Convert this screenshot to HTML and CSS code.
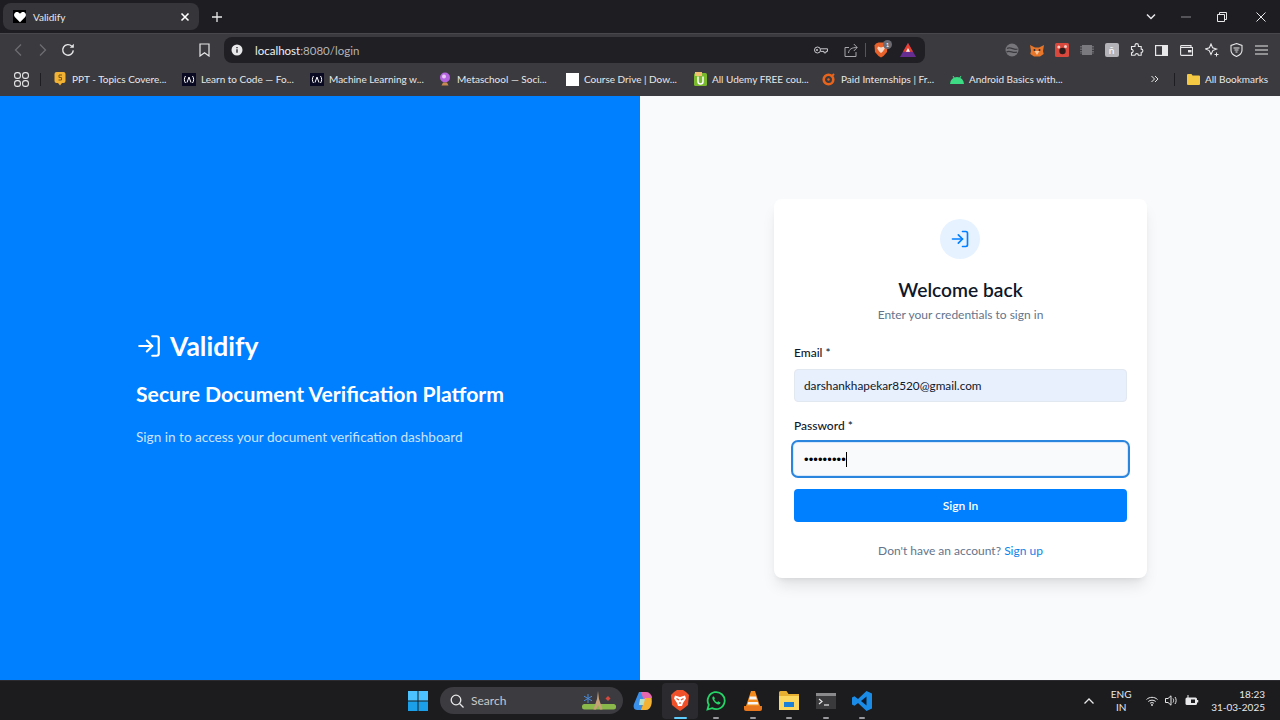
FILE: index.html
```html
<!DOCTYPE html>
<html lang="en">
<head>
  <meta charset="UTF-8">
  <meta name="viewport" content="width=device-width, initial-scale=1.0">
  <link rel="stylesheet" href="styles.css">
  <title>Validify</title>
</head>
<body>
  <!-- browser window -->
  <div class="tabstrip">
    <div class="tab">
      <span class="tab-favicon"><svg width="14" height="14" viewBox="0 0 24 24"><path d="M12 21 3.5 12.5C1 10 1.3 6 4 4.3 6.6 2.7 10 3.6 12 6.5 14 3.6 17.4 2.7 20 4.3 22.7 6 23 10 20.500 12.500Z" fill="#fff"/></svg></span>
      <span class="tab-title">Validify</span>
      <svg class="tab-close" width="10" height="10" viewBox="0 0 10 10"><path d="M1.500 1.500l7 7m0-7l-7 7" stroke="#fff" stroke-width="1.600"/></svg>
    </div>
    <svg class="tab-new" width="12" height="12" viewBox="0 0 12 12"><path d="M6 1v10M1 6h10" stroke="#e8e8ea" stroke-width="1.300"/></svg>
    <div class="window-controls">
      <svg width="12" height="8" viewBox="0 0 12 8"><path d="M2 1.500l4 4 4-4" fill="none" stroke="#e8e8ea" stroke-width="1.500"/></svg>
      <svg class="ctl-min" width="10" height="2" viewBox="0 0 10 2"><path d="M0 1h10" stroke="#8a8a8e"/></svg>
      <svg class="ctl-max" width="10" height="10" viewBox="0 0 10 10"><path d="M.5 2.500h7v7h-7zM2.500 2.500v-2h7v7h-2" fill="none" stroke="#e8e8ea"/></svg>
      <svg class="ctl-close" width="10" height="10" viewBox="0 0 10 10"><path d="M.5.5l9 9m0-9l-9 9" stroke="#e8e8ea"/></svg>
    </div>
  </div>

  <div class="toolbar">
    <div class="nav-buttons">
      <svg width="10" height="14" viewBox="0 0 10 14"><path d="M8 1.500 2.500 7 8 12.500" fill="none" stroke="#6d6d72" stroke-width="1.300"/></svg>
      <svg width="10" height="14" viewBox="0 0 10 14"><path d="M2 1.500 7.500 7 2 12.500" fill="none" stroke="#6d6d72" stroke-width="1.300"/></svg>
      <svg class="reload" width="14" height="14" viewBox="0 0 14 14"><path d="M12.300 7.400A5.300 5.300 0 1 1 10.800 3.200" fill="none" stroke="#e8e8ea" stroke-width="1.400"/><path d="M12.800.8v4h-4z" fill="#e8e8ea"/></svg>
    </div>
    <svg class="bookmark-page" width="11" height="14" viewBox="0 0 11 14"><path d="M1 1h9v12L5.500 9.800 1 13z" fill="none" stroke="#e8e8ea" stroke-width="1.200"/></svg>
    <div class="address">
      <svg width="12" height="12" viewBox="0 0 12 12"><circle cx="6" cy="6" r="5.500" fill="#e8e8ea"/><path d="M6 5.200v3.600M6 3v1.200" stroke="#1e1e22" stroke-width="1.300"/></svg>
      <span class="url">localhost<span class="url-dim">:8080/login</span></span>
      <div class="address-end">
        <svg width="14" height="8" viewBox="0 0 14 8"><circle cx="3.500" cy="4" r="3" fill="none" stroke="#c8c8cc"/><circle cx="3" cy="4" r="1" fill="#c8c8cc"/><path d="M6.500 2.800h7v2.600h-1.500v1.400h-2V5.400H6.500" fill="none" stroke="#c8c8cc"/></svg>
        <svg class="share" width="14" height="14" viewBox="0 0 14 14"><path d="M5 4.500H1v9h11V9" fill="none" stroke="#a8a8ac"/><path d="M4.500 10C5 6 8 4.500 13 4.500M9.800 1l3.400 3.500L9.800 8" fill="none" stroke="#a8a8ac"/></svg>
        <span class="address-sep"></span>
        <span class="brave-wrap">
          <svg width="14" height="16" viewBox="0 0 14 16"><path d="M2 1.500 4.500.5h5L12 1.500l1.500 2-.5 6.500-3.500 4L7 15.500 4.500 14 1 10 .5 3.500z" fill="#e8602a"/><path d="M4 4.500l3 1 3-1 .8 2-2 3L7 11 5.200 9.500l-2-3z" fill="#f5d8c8"/></svg>
          <span class="brave-badge">1</span>
        </span>
        <svg class="triangle" width="16" height="14" viewBox="0 0 16 14"><path d="M8 0l8 14H0z" fill="#662d91"/><path d="M8 0l5 8.800H3z" fill="#e8412f"/><path d="M8 5l2 3.800H6z" fill="#fff"/></svg>
      </div>
    </div>
    <div class="extensions">
      <svg width="14" height="14" viewBox="0 0 14 14"><circle cx="7" cy="7" r="6.500" fill="#77777b"/><path d="M2 5.500C6 3 9 8 12.500 6M1.500 9C5 6.500 8 11 12 9" fill="none" stroke="#3a3a3f" stroke-width="1.200"/></svg>
      <svg width="14" height="13" viewBox="0 0 14 13"><path d="M0 1l5 2.500h4L14 1l-1 6 .7 3-3.700 2.500H4L.3 10 1 7z" fill="#e8762a"/><path d="M4.500 7h5L7 11z" fill="#f5c9a0"/><circle cx="4.500" cy="6" r="1" fill="#2c2c30"/><circle cx="9.500" cy="6" r="1" fill="#2c2c30"/></svg>
      <svg width="14" height="14" viewBox="0 0 14 14"><rect width="14" height="14" rx="1.500" fill="#d8483c"/><circle cx="7.500" cy="8" r="3.200" fill="#2c1c1c"/><circle cx="3.800" cy="4" r="1.500" fill="#f5d0c8"/><circle cx="10.500" cy="3.500" r="1.500" fill="#f5d0c8"/></svg>
      <svg width="14" height="12" viewBox="0 0 14 12"><rect x="2" y="1" width="10" height="10" fill="#7a7a7e"/><path d="M1 2v8M13 2v8" stroke="#77777b" stroke-width="1.500" stroke-dasharray="1.500 1"/></svg>
      <span class="ext-tile">ñ</span>
      <svg width="14" height="14" viewBox="0 0 14 14"><path d="M5 2.300a1.700 1.700 0 0 1 3.400 0V3.500h2.800v2.600a1.700 1.700 0 0 1 0 3.400v2.800H8.400a1.700 1.700 0 0 0-3.400 0H1.500V9.800a1.700 1.700 0 0 0 0-3.400V3.500H5z" fill="none" stroke="#e8e8ea" stroke-width="1.100"/></svg>
      <svg width="13" height="11" viewBox="0 0 13 11"><rect x=".6" y=".6" width="11.800" height="9.800" fill="none" stroke="#e8e8ea" stroke-width="1.200"/><rect x="7" y="1" width="5.500" height="9" fill="#e8e8ea"/></svg>
      <svg width="13" height="11" viewBox="0 0 13 11"><path d="M11 2.500V.6H1.500C1 .6.600 1 .6 1.500v8c0 .5.400.9.900.9h11V2.500H.8" fill="none" stroke="#e8e8ea" stroke-width="1.100"/><rect x="8" y="5" width="3.500" height="2.400" fill="#e8e8ea"/></svg>
      <svg width="14" height="14" viewBox="0 0 14 14"><path d="M6 1l1.600 3.800L11.500 6 7.800 7.600 6 11.500 4.200 7.600.6 6l3.800-1.200z" fill="none" stroke="#e8e8ea" stroke-width="1.100"/><path d="M11.500 9.500v4M9.500 11.500h4" stroke="#e8e8ea"/></svg>
      <svg width="13" height="14" viewBox="0 0 13 14"><path d="M6.500.6 12 2.500v4.800c0 3-2.500 5-5.500 6.100C3.500 12.300 1 10.300 1 7.300V2.500z" fill="none" stroke="#e8e8ea" stroke-width="1.100"/><path d="M3.500 5h6M4.500 7h4M5.500 9h2" stroke="#e8e8ea"/></svg>
      <svg width="13" height="10" viewBox="0 0 13 10"><path d="M0 1h13M0 5h13M0 9h13" stroke="#e8e8ea" stroke-width="1.200"/></svg>
    </div>
  </div>

  <div class="bookmarks">
    <svg class="apps" width="15" height="15" viewBox="0 0 15 15"><g fill="none" stroke="#e8e8ea" stroke-width="1.100"><rect x=".6" y=".6" width="5.800" height="5.800" rx="2.500"/><rect x="8.600" y=".6" width="5.800" height="5.800" rx="2.500"/><rect x=".6" y="8.600" width="5.800" height="5.800" rx="2.500"/><rect x="8.600" y="8.600" width="5.800" height="5.800" rx="2.500"/></g></svg>
    <span class="bar-sep"></span>
    <div class="bookmark-list">
      <div class="bookmark">
        <svg width="13" height="14" viewBox="0 0 13 14"><rect x=".5" width="11" height="11" rx="2" fill="#f2b233"/><path d="M4 11h4l-2 2.500z" fill="#f2b233"/><path d="M8 3H5v2.500h2.500V8H4.500" fill="none" stroke="#7a5510" stroke-width="1"/></svg>
        <span>PPT - Topics Covere...</span>
      </div>
      <div class="bookmark">
        <svg width="14" height="13" viewBox="0 0 14 13"><rect width="14" height="13" fill="#0a0a23"/><path d="M3.500 3C2 5 2 8 3.500 10M10.500 3C12 5 12 8 10.500 10M5 9.500 7 4l2 5.500" fill="none" stroke="#fff"/></svg>
        <span>Learn to Code — Fo...</span>
      </div>
      <div class="bookmark">
        <svg width="14" height="13" viewBox="0 0 14 13"><rect width="14" height="13" fill="#0a0a23"/><path d="M3.500 3C2 5 2 8 3.500 10M10.500 3C12 5 12 8 10.500 10M5 9.500 7 4l2 5.500" fill="none" stroke="#fff"/></svg>
        <span>Machine Learning w...</span>
      </div>
      <div class="bookmark">
        <svg width="14" height="14" viewBox="0 0 14 14"><circle cx="7" cy="5.500" r="5" fill="#b565e0"/><circle cx="6" cy="4.500" r="2" fill="#e8c8f5"/><path d="M3.500 13.500 5 10.500h4l1.500 3z" fill="#c88a50"/></svg>
        <span>Metaschool — Soci...</span>
      </div>
      <div class="bookmark">
        <span class="blank-favicon"></span>
        <span>Course Drive | Dow...</span>
      </div>
      <div class="bookmark">
        <svg width="13" height="14" viewBox="0 0 13 14"><rect y="1" width="13" height="13" rx="1.500" fill="#7ab82e"/><rect x="1" width="7" height="4" fill="#f0c070"/><path d="M4 4.500v5a2.500 2.500 0 0 0 5 0v-5" fill="none" stroke="#fff" stroke-width="1.500"/></svg>
        <span>All Udemy FREE cou...</span>
      </div>
      <div class="bookmark">
        <svg width="14" height="14" viewBox="0 0 14 14"><circle cx="6.500" cy="7.500" r="4.800" fill="none" stroke="#e8641c" stroke-width="2.600"/><circle cx="6.500" cy="7.500" r="1.200" fill="#e8641c"/><path d="M9 5l3-3" stroke="#e8641c" stroke-width="2"/></svg>
        <span>Paid Internships | Fr...</span>
      </div>
      <div class="bookmark">
        <svg width="14" height="9" viewBox="0 0 14 9"><path d="M0 9a7 7 0 0 1 14 0z" fill="#3ddc84"/><path d="M3 1l1.500 2.500M11 1 9.500 3.500" stroke="#3ddc84"/></svg>
        <span>Android Basics with...</span>
      </div>
    </div>
    <svg class="more" width="8" height="8" viewBox="0 0 8 8"><path d="M.5 1l3 3-3 3M4 1l3 3-3 3" fill="none" stroke="#e8e8ea"/></svg>
    <span class="bar-sep more-sep"></span>
    <div class="bookmark all-bookmarks">
      <svg width="13" height="11" viewBox="0 0 13 11"><path d="M0 1a1 1 0 0 1 1-1h3.500l1 1.500H12a1 1 0 0 1 1 1V10a1 1 0 0 1-1 1H1a1 1 0 0 1-1-1z" fill="#f4c842"/></svg>
      <span>All Bookmarks</span>
    </div>
  </div>

  <!-- the app -->
  <main class="page">
    <section class="hero">
      <div class="brand">
        <svg width="26" height="26" viewBox="0 0 24 24" fill="none" stroke="#fff" stroke-width="2" stroke-linecap="round" stroke-linejoin="round"><path d="M15 3h4a2 2 0 0 1 2 2v14a2 2 0 0 1-2 2h-4"/><path d="M10 17l5-5-5-5"/><path d="M15 12H3"/></svg>
        <span>Validify</span>
      </div>
      <h2 class="hero-title">Secure Document Verification Platform</h2>
      <p class="hero-text">Sign in to access your document verification dashboard</p>
    </section>

    <section class="panel">
      <form class="card">
        <div class="card-icon">
          <svg width="20" height="20" viewBox="0 0 24 24" fill="none" stroke="#007fff" stroke-width="2" stroke-linecap="round" stroke-linejoin="round"><path d="M15 3h4a2 2 0 0 1 2 2v14a2 2 0 0 1-2 2h-4"/><path d="M10 17l5-5-5-5"/><path d="M15 12H3"/></svg>
        </div>
        <h1 class="card-title">Welcome back</h1>
        <p class="card-sub">Enter your credentials to sign in</p>

        <label class="field-label email-label">Email *</label>
        <div class="input input-filled">darshankhapekar8520@gmail.com</div>

        <label class="field-label password-label">Password *</label>
        <div class="input input-focus"><span class="dots">•••••••••</span><span class="caret"></span></div>

        <button type="button" class="submit">Sign In</button>
        <p class="card-foot">Don't have an account? <a href="#" class="link">Sign up</a></p>
      </form>
    </section>
  </main>

  <!-- windows taskbar -->
  <footer class="taskbar">
    <div class="task-center">
      <svg class="start" width="20" height="20" viewBox="0 0 20 20"><rect width="9.500" height="9.500" fill="#4cc2ff"/><rect x="10.500" width="9.500" height="9.500" fill="#4cc2ff"/><rect y="10.500" width="9.500" height="9.500" fill="#1a9fe8"/><rect x="10.500" y="10.500" width="9.500" height="9.500" fill="#1a9fe8"/></svg>
      <div class="search">
        <svg width="14" height="14" viewBox="0 0 14 14"><circle cx="6" cy="6" r="4.800" fill="none" stroke="#e8e8ea" stroke-width="1.300"/><path d="M9.500 9.500l4 4" stroke="#e8e8ea" stroke-width="1.300"/></svg>
        <span>Search</span>
        <svg class="search-art" width="34" height="20" viewBox="0 0 34 20"><rect y="13" width="34" height="5.500" rx="2.500" fill="#8ab84a"/><path d="M16 0l1 8 3.500 10.500h-2.500L16 14l-2 4.500h-2.500L15 8z" fill="#c8a078"/><path d="M6 3v9M2 5.200l8 4.600M10 5.200 2 9.800" stroke="#4a8ad8"/><path d="M26 5l2.500 2.500L26 10l-2.500-2.500z" fill="#d8483c"/></svg>
      </div>
      <div class="task-icon task-copilot">
        <svg width="20" height="20" viewBox="0 0 20 20"><path d="M6 1h6l-3 18H4C1 19 0 16 1 13z" fill="#3a8fe8"/><path d="M8 1h5c3 0 5 2 6 5l-1 6-7-2z" fill="#e868b0"/><path d="M12 7h6c2 4 0 12-5 12H8z" fill="#f2b233"/><path d="M7 8h5l-1.500 6H6z" fill="#b8e0c8"/></svg>
      </div>
      <div class="task-icon task-active">
        <svg width="18" height="21" viewBox="0 0 18 21"><path d="M3 2l3-2h6l3 2 3 3-1 10-5 4-3 2-3-2-5-4L0 5z" fill="#f0502a"/><path d="M4 5.500 9 7l5-1.500 1 3-3 4.500-1 3H7l-1-3-3-4.500z" fill="#fff"/><path d="M5.500 8.500 8 10M12.500 8.500 10 10M9 12v2" stroke="#f0502a" stroke-width="1.200"/></svg>
        <span class="task-mark active-mark"></span>
      </div>
      <div class="task-icon">
        <svg width="20" height="20" viewBox="0 0 20 20"><path d="M1.500 18.500l1.300-4.700a8.500 8.500 0 1 1 3.400 3.300z" fill="none" stroke="#25d366" stroke-width="1.800"/><path d="M7 5.500c-1 .8-1 2.500.5 4.500s3.500 3.500 5 3.500c1 0 2-1 2-2l-2.300-1.200-1 1c-1.300-.5-2.300-1.500-3-3l.8-1L7.800 5.500z" fill="#25d366"/></svg>
        <span class="task-mark"></span>
      </div>
      <div class="task-icon">
        <svg width="18" height="20" viewBox="0 0 18 20"><path d="M7 0h4l5 15H2z" fill="#f28a1c"/><path d="M6 5.500h6l1 3H5zM4.300 11h9.400l.8 2.500h-11z" fill="#f5f5f5"/><path d="M0 15h18v3a2 2 0 0 1-2 2H2a2 2 0 0 1-2-2z" fill="#e8761c"/></svg>
        <span class="task-mark"></span>
      </div>
      <div class="task-icon">
        <svg width="20" height="19" viewBox="0 0 20 19"><path d="M0 1.500A1.500 1.500 0 0 1 1.500 0h6l2 3H20v16H0z" fill="#e8b030"/><rect y="5" width="20" height="14" fill="#fcd860"/><rect x="5" y="11" width="10" height="5" fill="#1a80d8"/></svg>
        <span class="task-mark"></span>
      </div>
      <div class="task-icon">
        <svg width="20" height="16" viewBox="0 0 20 16"><rect width="20" height="16" fill="#3a3a3c"/><rect width="20" height="3" fill="#8a8a8c"/><path d="M3 6l3 2.500L3 11" fill="none" stroke="#e8e8ea" stroke-width="1.200"/><path d="M8 12h5" stroke="#e8e8ea" stroke-width="1.200"/></svg>
        <span class="task-mark"></span>
      </div>
      <div class="task-icon">
        <svg width="20" height="20" viewBox="0 0 20 20"><path d="M14.500 0 20 2.500v15L14.500 20 6 12l-3.500 2.800L0 13.500v-7L2.500 5.200 6 8z" fill="#1a8ce8"/><path d="M14.500 5.500 9 10l5.500 4.500z" fill="#0b1a2c"/></svg>
        <span class="task-mark"></span>
      </div>
    </div>
    <div class="tray">
      <svg class="tray-up" width="10" height="6" viewBox="0 0 10 6"><path d="M.5 5.500 5 1l4.500 4.500" fill="none" stroke="#e8e8ea" stroke-width="1.300"/></svg>
      <div class="lang">ENG<br>IN</div>
      <div class="tray-icons">
        <svg width="12" height="10" viewBox="0 0 12 10"><path d="M.5 3.500C3.500.6 8.500.6 11.500 3.500M2.300 5.500C4.300 3.700 7.700 3.700 9.700 5.500M4 7.300c1.100-.9 2.900-.9 4 0" fill="none" stroke="#e8e8ea"/><circle cx="6" cy="9" r=".9" fill="#e8e8ea"/></svg>
        <svg width="13" height="11" viewBox="0 0 13 11"><path d="M.5 3.500h2.500L6 .8v9.400L3 7.500H.5z" fill="none" stroke="#e8e8ea"/><path d="M8 3.500c.8 1.200.8 2.800 0 4M10 2c1.500 2 1.500 5 0 7" fill="none" stroke="#e8e8ea"/></svg>
        <svg width="14" height="11" viewBox="0 0 14 11"><rect x=".5" y="2.500" width="11.500" height="7.500" rx="1.500" fill="#e8e8ea"/><path d="M12.500 5v2.500" stroke="#e8e8ea" stroke-width="1.500"/><path d="M3 0v3" stroke="#e8e8ea"/><rect x="6" y="4.500" width="4" height="3.500" fill="#1d1d20"/></svg>
      </div>
      <div class="clock"><span>18:23</span><span>31-03-2025</span></div>
    </div>
  </footer>
</body>
</html>
```

FILE: styles.css
```css
* {
  box-sizing: border-box;
}
html, body {
  margin: 0;
  height: 720px;
  overflow: hidden;
}
body {
  display: flex;
  flex-direction: column;
  font-family: Lato, "Open Sans", sans-serif;
  background-color: #f8fafc;
}
svg {
  display: block;
  flex-shrink: 0;
}

/* tab strip */
.tabstrip {
  height: 33px;
  display: flex;
  align-items: center;
  padding-left: 3px;
  background-color: #1e1e22;
}
.tab {
  width: 196px;
  height: 27px;
  display: flex;
  align-items: center;
  padding: 0 9px 0 10px;
  border-radius: 8px;
  background-color: #35353a;
  color: #e8e8ea;
  font-size: 10px;
}
.tab-favicon {
  width: 13px;
  height: 13px;
  display: flex;
  align-items: center;
  justify-content: center;
  background-color: #000;
}
.tab-title {
  margin-left: 7px;
  flex: 1;
}
.tab-new {
  margin-left: 12px;
}
.window-controls {
  margin-left: auto;
  display: flex;
  align-items: center;
  padding-right: 14px;
}
.ctl-min {
  margin-left: 24px;
}
.ctl-max {
  margin-left: 26px;
}
.ctl-close {
  margin-left: 29px;
}

/* toolbar */
.toolbar {
  height: 31px;
  display: flex;
  align-items: center;
  padding: 3px 0 1px;
  background-color: #3a3a3f;
  border-top: 1px solid #47474c;
}
.nav-buttons {
  width: 76px;
  display: flex;
  align-items: center;
  gap: 15px;
  padding-left: 13px;
}
.reload {
  margin-left: -2px;
}
.bookmark-page {
  margin-left: 123px;
}
.address {
  width: 701px;
  height: 26px;
  margin-left: 14px;
  display: flex;
  align-items: center;
  padding-left: 7px;
  border-radius: 8px;
  background-color: #202024;
  font-size: 11.500px;
}
.url {
  margin-left: 12px;
  color: #f0f0f2;
}
.url-dim {
  color: #b4b4b8;
}
.address-end {
  margin-left: auto;
  display: flex;
  align-items: center;
  padding-right: 9px;
}
.share {
  margin-left: 16px;
}
.address-sep {
  width: 1px;
  height: 14px;
  margin: 0 8px 0 7px;
  background-color: #55555a;
}
.brave-wrap {
  position: relative;
  display: block;
}
.brave-badge {
  position: absolute;
  top: -2px;
  left: 9px;
  width: 9px;
  height: 9px;
  border-radius: 50%;
  background-color: #6b6b73;
  color: #fff;
  font-size: 6px;
  line-height: 9px;
  text-align: center;
}
.triangle {
  margin-left: 12px;
}
.extensions {
  margin-left: 74px;
  display: grid;
  grid-template-columns: repeat(11, 25px);
  align-items: center;
  justify-items: center;
}
.ext-tile {
  width: 14px;
  height: 14px;
  border-radius: 2px;
  background-color: #b4b4b8;
  color: #fff;
  font-size: 10px;
  line-height: 14px;
  text-align: center;
}

/* bookmarks bar */
.bookmarks {
  height: 32px;
  display: flex;
  align-items: center;
  padding: 0 0 2px 14px;
  background-color: #3a3a3f;
  color: #e8e8ea;
  font-size: 10px;
}
.bar-sep {
  width: 1px;
  height: 13px;
  margin-left: 11px;
  background-color: #1e1e22;
}
.bookmark-list {
  width: 1024px;
  margin-left: 13px;
  display: grid;
  grid-template-columns: repeat(8, 128px);
}
.bookmark {
  display: flex;
  align-items: center;
  gap: 5px;
  white-space: nowrap;
}
.blank-favicon {
  width: 13px;
  height: 13px;
  background-color: #fff;
}
.more {
  margin-left: 73px;
}
.more-sep {
  margin-left: 15px;
}
.all-bookmarks {
  margin-left: 12px;
}

/* app */
.page {
  flex: 1;
  display: flex;
}
.hero {
  width: 640px;
  display: flex;
  flex-direction: column;
  justify-content: center;
  padding: 1px 0 0 136px;
  background-color: #007fff;
  color: #fff;
}
.brand {
  display: flex;
  align-items: center;
  gap: 8px;
  font-size: 26.500px;
  font-weight: 700;
  line-height: 32px;
}
.hero-title {
  margin: 18px 0 0;
  font-size: 21.200px;
  font-weight: 700;
  line-height: 28px;
}
.hero-text {
  margin: 19px 0 0;
  font-size: 13.600px;
  line-height: 20px;
  color: rgba(255, 255, 255, 0.8);
}
.panel {
  flex: 1;
  display: flex;
  align-items: center;
  justify-content: center;
  padding: 1px 0 0 1px;
}
.card {
  width: 373px;
  display: flex;
  flex-direction: column;
  padding: 20px 20px 18px;
  border-radius: 8px;
  background-color: #fff;
  box-shadow: 0 10px 15px -3px rgba(0, 0, 0, 0.1), 0 4px 6px -4px rgba(0, 0, 0, 0.1);
}
.card-icon {
  width: 40px;
  height: 40px;
  margin: 0 auto 0 146px;
  display: flex;
  align-items: center;
  justify-content: center;
  border-radius: 50%;
  background-color: #e6f2ff;
}
.card-title {
  margin: 16px 0 0;
  font-size: 19.200px;
  font-weight: 600;
  line-height: 30px;
  text-align: center;
  color: #0f172a;
}
.card-sub {
  margin: 1px 0 0;
  font-size: 12px;
  line-height: 18px;
  text-align: center;
  color: #64748b;
}
.field-label {
  font-size: 12px;
  font-weight: 500;
  line-height: 16px;
  color: #0f172a;
}
.email-label {
  margin-top: 21px;
}
.password-label {
  margin-top: 16px;
}
.input {
  height: 33px;
  margin-top: 8px;
  display: flex;
  align-items: center;
  padding: 0 9px;
  border-radius: 4px;
  font-size: 11.800px;
  color: #0f172a;
}
.input-filled {
  border: 1px solid #e2e8f0;
  background-color: #e8f0fe;
}
.input-focus {
  height: 38px;
  margin: 6px -3px 0;
  padding: 0 11px;
  border: 2px solid #2a85de;
  border-radius: 7px;
  background-color: #f8fafc;
  box-shadow: inset 0 0 0 1px #d8e8fa;
}
.dots {
  font-family: "Liberation Sans", sans-serif;
  font-size: 13px;
  letter-spacing: 0.1px;
  color: #000;
}
.caret {
  width: 1px;
  height: 15px;
  background-color: #000;
}
.submit {
  height: 33px;
  margin-top: 11px;
  border: none;
  border-radius: 4px;
  background-color: #007fff;
  color: #fff;
  font-family: inherit;
  font-size: 12px;
  font-weight: 600;
}
.card-foot {
  margin: 20px 0 0;
  font-size: 12px;
  line-height: 18px;
  text-align: center;
  color: #64748b;
}
.link {
  color: #0b84e8;
  text-decoration: none;
}

/* taskbar */
.taskbar {
  height: 40px;
  display: flex;
  align-items: center;
  background-color: #1c1c1f;
  border-top: 1px solid #2c2c30;
  color: #e8e8ea;
}
.task-center {
  display: flex;
  align-items: center;
  margin-left: 408px;
}
.search {
  width: 183px;
  height: 27px;
  margin-left: 12px;
  display: flex;
  align-items: center;
  padding-left: 10px;
  border-radius: 14px;
  background-color: #3c3c40;
  font-size: 12px;
  color: #c8c8cc;
}
.search span {
  margin-left: 7px;
}
.search-art {
  margin-left: auto;
  margin-right: 7px;
}
.task-icon {
  position: relative;
  width: 36.500px;
  height: 36px;
  display: flex;
  align-items: center;
  justify-content: center;
}
.task-copilot {
  margin-left: 2px;
}
.task-active {
  border-radius: 4px;
  background-color: #2b2b2f;
}
.task-mark {
  position: absolute;
  bottom: 0;
  left: 50%;
  width: 6px;
  height: 2px;
  margin-left: -3px;
  border-radius: 1px;
  background-color: #9a9a9e;
}
.active-mark {
  width: 13px;
  margin-left: -6px;
  background-color: #60cdff;
}
.tray {
  margin-left: auto;
  display: flex;
  align-items: center;
  padding-right: 15px;
}
.lang {
  margin-left: 12px;
  width: 30px;
  font-size: 10px;
  line-height: 13px;
  text-align: center;
}
.tray-icons {
  margin-left: 10px;
  display: flex;
  align-items: center;
  gap: 7px;
}
.clock {
  margin-left: 12px;
  display: flex;
  flex-direction: column;
  align-items: flex-end;
  font-size: 10px;
  line-height: 13px;
}
```
